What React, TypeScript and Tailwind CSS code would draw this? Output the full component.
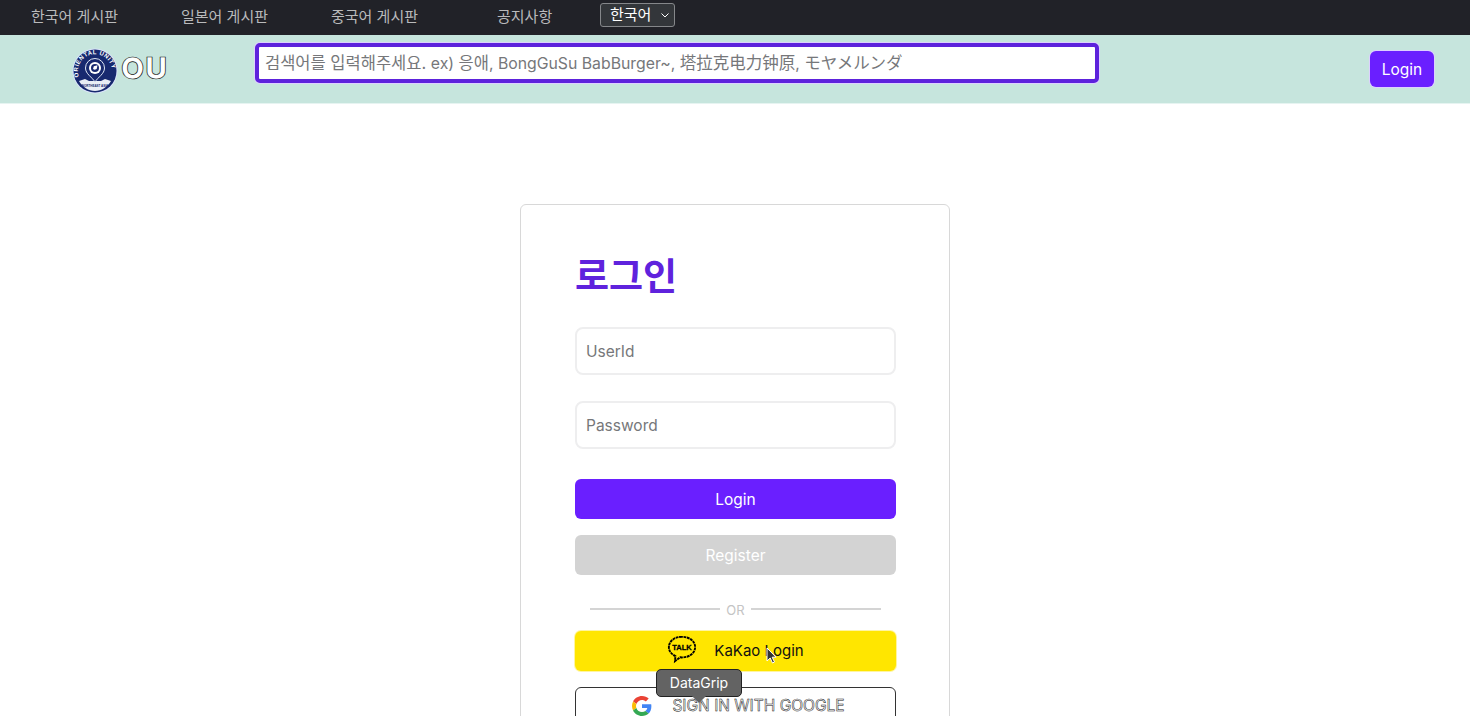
import React from 'react';

const font = "font-['Inter','Noto_Sans_CJK_KR','Noto_Sans',sans-serif]";

const Logo = () => (
  <svg width="46" height="46" viewBox="0 0 46 46" className="shrink-0">
    <defs>
      <path id="ring" d="M8.200 31.500a17 17 0 1 1 29.600 0" fill="none" />
    </defs>
    <circle cx="23" cy="23" r="22.500" fill="#dbe4fb" />
    <circle cx="23" cy="23" r="21.500" fill="#17296f" />
    <path d="M7 33l6-2 4 2h12l4-2 6 2c-3.500 6-9.500 10-16 10S10.500 39 7 33z" fill="#e9eef5" />
    <text fontSize="6" fontWeight="700" fill="#fff" letterSpacing="0.5" fontFamily="Liberation Sans">
      <textPath href="#ring" startOffset="3">ORIENTAL UNITY</textPath>
    </text>
    <text x="23" y="39" textAnchor="middle" fontSize="3" fontWeight="700" fill="#17296f" fontFamily="Liberation Sans">NORTHEAST ASIA</text>
    <path d="M23 34c-3-5-9.500-8-9.500-14a9.500 9.500 0 0 1 19 0c0 6-6.500 9-9.500 14z" fill="#17296f" stroke="#dfe7f5" strokeWidth="1" />
    <circle cx="23" cy="20" r="6" fill="#fff" />
    <circle cx="23" cy="20" r="4" fill="#17296f" />
    <path d="M21 21l.8-2.700 3.700-1-.8 3.700-2 .8z" fill="#fff" />
  </svg>
);

const KakaoIcon = () => (
  <svg width="30" height="30" viewBox="0 0 32 32" className="shrink-0 mb-[4px]">
    <path
      d="M16 3C8 3 2 7.700 2 14c0 4.300 2.800 7.700 7 9.500L8.500 29l5.500-4.200c.7.100 1.300.2 2 .2 8 0 14-4.700 14-11S24 3 16 3z"
      fill="#ffe600"
      stroke="#000"
      strokeWidth="2"
      strokeDasharray="3 0.7"
    />
    <text x="16" y="17.500" textAnchor="middle" fontSize="8" fontWeight="700" fill="#000" stroke="#000" strokeWidth="0.300" fontFamily="Liberation Sans">TALK</text>
  </svg>
);

const GoogleIcon = () => (
  <svg width="20" height="20" viewBox="0 0 48 48" className="shrink-0">
    <path fill="#EA4335" d="M24 9.500c3.500 0 6.700 1.200 9.200 3.600l6.900-6.900C35.900 2.400 30.500 0 24 0 14.600 0 6.500 5.400 2.600 13.200l8 6.200C12.400 13.700 17.700 9.500 24 9.500z" />
    <path fill="#4285F4" d="M46.500 24.500c0-1.600-.1-3.100-.4-4.500H24v9h12.700c-.6 2.900-2.200 5.400-4.700 7.100l7.700 6c4.500-4.200 6.800-10.300 6.800-17.600z" />
    <path fill="#FBBC05" d="M10.500 28.600c-.5-1.400-.8-3-.8-4.600s.3-3.200.8-4.600l-8-6.200C.9 16.500 0 20.100 0 24s.9 7.500 2.600 10.800z" />
    <path fill="#34A853" d="M24 48c6.500 0 11.900-2.100 15.900-5.800l-7.700-6c-2.100 1.400-4.900 2.300-8.200 2.300-6.300 0-11.600-4.200-13.500-9.900l-8 6.200C6.500 42.600 14.600 48 24 48z" />
  </svg>
);

const App = () => {
  return (
    <div className={`${font} h-[716px] overflow-hidden bg-white relative`}>
      {/* top nav */}
      <nav className="h-[35px] bg-[#212228] flex items-center pl-[31px] pb-[1px] text-[15px] text-[#b9babc]">
        <a className="w-[150px]">한국어 게시판</a>
        <a className="w-[150px]">일본어 게시판</a>
        <a className="w-[166px]">중국어 게시판</a>
        <a className="w-[103px]">공지사항</a>
        <div className="w-[75px] h-[24px] mb-[4px] rounded-[3px] border border-[#85878a] bg-[#33363a] text-white text-[15px] flex items-center justify-between pl-[9px] pr-[4px]">
          <span>한국어</span>
          <svg width="10" height="10" viewBox="0 0 10 10">
            <path d="M1.500 3.500L5 7l3.500-3.500" fill="none" stroke="#fff" strokeWidth="1" />
          </svg>
        </div>
      </nav>

      {/* header */}
      <header className="h-[69px] bg-[#c6e5dd] border-b border-[#e6f4f1] flex items-start pl-[72px] pr-[36px]">
        <div className="w-[183px] flex items-center mt-[13px]">
          <Logo />
          <span className="ml-[3px] mb-[7px] text-[30px] leading-[36px] font-extrabold text-white tracking-[1px] [-webkit-text-stroke:0.7px_#111]">OU</span>
        </div>
        <div className="w-[844px] h-[40px] mt-[8px] rounded-[5px] bg-white border-[4px] border-[#5d22dc] shadow-[0_0_0_1px_#ddd0ff] flex items-center pl-[6px] pt-[1px] whitespace-pre text-[16.5px] text-[#76777a]">
          검색어를 입력해주세요. <span className="text-[15.8px]">ex) </span>응애<span className="text-[15.8px]">, BongGuSu BabBurger~, </span>塔拉克电力钟原<span className="text-[15.8px]">, </span>モヤメルンダ
        </div>
        <button className="ml-auto mt-[16px] w-[64px] h-[36px] pt-[1px] rounded-[6px] bg-[#6a1fff] text-white text-[15.5px] shadow-[0_0_0_1px_#ddd0ff]">Login</button>
      </header>

      {/* login card */}
      <main className="flex justify-center pt-[100px]">
        <div className="w-[430px] h-[600px] shrink-0 rounded-[6px] border-[1.5px] border-[#d8d8d8] pl-[54px] pr-[53px] pt-[48px]">
          <h1 className="text-[37px] leading-[48px] font-bold text-[#5f22dd]">로그인</h1>
          <div className="mt-[26px] h-[48px] rounded-[8px] border-2 border-[#eeeeef] flex items-center pl-[9px] pt-[1px] text-[15.5px] text-[#76777a]">UserId</div>
          <div className="mt-[26px] h-[48px] rounded-[8px] border-2 border-[#eeeeef] flex items-center pl-[9px] pt-[1px] text-[15.5px] text-[#76777a]">Password</div>
          <button className="block w-full mt-[30px] h-[40px] pt-[1px] rounded-[6px] bg-[#6a1fff] text-white text-[15.5px]">Login</button>
          <button className="block w-full mt-[16px] h-[40px] pt-[1px] rounded-[6px] bg-[#d3d3d3] text-white text-[15.5px]">Register</button>
          <div className="mt-[26px] h-[16px] flex items-center gap-[6px] px-[15px] text-[13px] text-[#c4c4c4]">
            <span className="flex-1 h-[2px] bg-[#d4d4d4]" />
            <span className="mt-[3px]">OR</span>
            <span className="flex-1 h-[2px] bg-[#d4d4d4]" />
          </div>
          <button className="w-full mt-[14px] h-[40px] rounded-[6px] bg-[#ffe600] shadow-[0_0_0_1px_#fff5a0] text-[#111] text-[15px] flex items-center justify-center gap-[17px]">
            <KakaoIcon />
            <span>KaKao Login</span>
          </button>
          <button className="w-full mt-[16px] h-[40px] rounded-[6px] border-[1.5px] border-[#333] bg-white flex items-start justify-center gap-[20px] pl-[6px] pt-[8px] text-[15.5px] text-white [-webkit-text-stroke:0.5px_#111]">
            <GoogleIcon />
            <span className="leading-[20px]">SIGN IN WITH GOOGLE</span>
          </button>
        </div>
      </main>

      {/* dock tooltip + cursor, captured over the page */}
      <div className="absolute left-[656px] top-[669px] w-[86px] h-[28px] pb-[1px] rounded-[5px] bg-[#636363] border border-[#222] flex items-center justify-center text-[14px] text-white">
        DataGrip
        <span className="absolute left-[37px] top-[21px] w-[10px] h-[10px] rotate-45 bg-[#636363]" />
      </div>
      <svg className="absolute left-[766px] top-[647px]" width="12" height="18" viewBox="0 0 12 18">
        <path d="M1 1v13l3.200-3 2.300 5 2-1-2.300-4.800H10z" fill="#333" stroke="#fff" strokeWidth="1" />
      </svg>
    </div>
  );
};

export default App;
